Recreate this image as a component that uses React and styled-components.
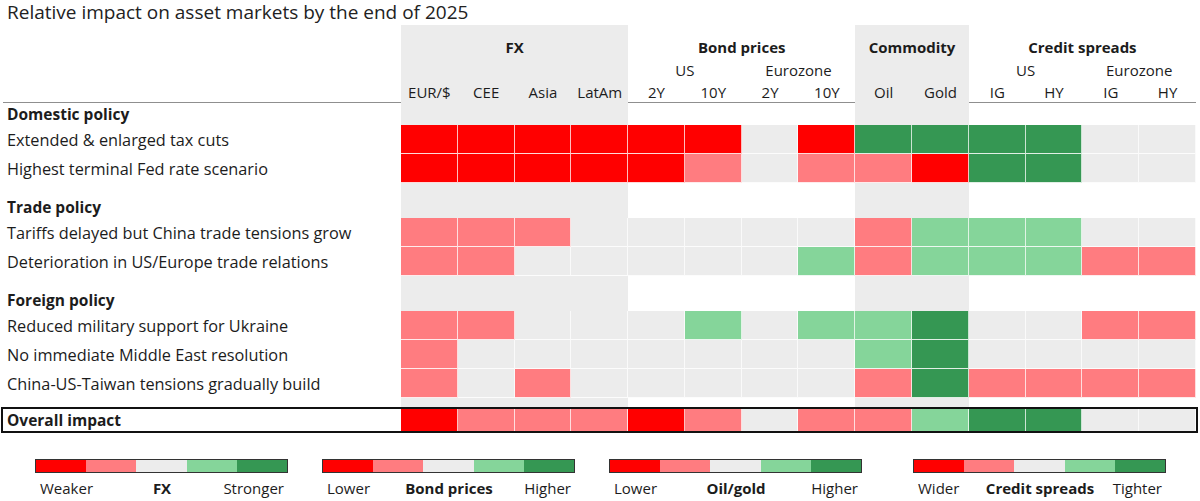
import React from 'react'
import styled, { createGlobalStyle } from 'styled-components'

const GlobalStyle = createGlobalStyle`
  html, body {
    margin: 0;
    padding: 0;
    background: #ffffff;
  }
  body {
    font-family: "Open Sans", "Noto Sans", sans-serif;
    color: #1c1c1c;
  }
`

// colour key: R strong red, r light red, n neutral, g light green, G dark green
const COLORS = {
  R: '#ff0000',
  r: '#ff7c80',
  n: '#ececec',
  g: '#85d59a',
  G: '#359753',
}
const BAND = '#ececec'

const isBand = (i) => i < 4 || i === 8 || i === 9

const columns = ['EUR/$', 'CEE', 'Asia', 'LatAm', '2Y', '10Y', '2Y', '10Y', 'Oil', 'Gold', 'IG', 'HY', 'IG', 'HY']

const sections = [
  {
    title: 'Domestic policy',
    first: true,
    rows: [
      { label: 'Extended & enlarged tax cuts', cells: 'RRRRRRnRGGGGnn' },
      { label: 'Highest terminal Fed rate scenario', cells: 'RRRRRrnrrRGGnn' },
    ],
  },
  {
    title: 'Trade policy',
    rows: [
      { label: 'Tariffs delayed but China trade tensions grow', cells: 'rrrnnnnnrgggnn' },
      { label: 'Deterioration in US/Europe trade relations', cells: 'rrnnnnngrgggrr' },
    ],
  },
  {
    title: 'Foreign policy',
    rows: [
      { label: 'Reduced military support for Ukraine', cells: 'rrnnngnggGnnrr' },
      { label: 'No immediate Middle East resolution', cells: 'rnnnnnnngGnnnn' },
      { label: 'China-US-Taiwan tensions gradually build', cells: 'rnrnnnnnrGrrrr' },
    ],
  },
]

const overall = 'RrrrRrnrrgGGnn'

const legends = [
  { left: 'Weaker', mid: 'FX', right: 'Stronger' },
  { left: 'Lower', mid: 'Bond prices', right: 'Higher' },
  { left: 'Lower', mid: 'Oil/gold', right: 'Higher' },
  { left: 'Wider', mid: 'Credit spreads', right: 'Tighter' },
]

const Page = styled.div`
  width: 1200px;
  height: 501px;
  overflow: hidden;
`

const Title = styled.div`
  height: 25px;
  line-height: 25px;
  font-size: 19px;
  padding-left: 7px;
  color: #222;
`

const Table = styled.div`
  margin-left: 3px;
  width: 1193px;
`

const Row = styled.div`
  display: grid;
  grid-template-columns: 398px repeat(14, 1fr);
  height: ${(p) => p.h}px;
`

const Label = styled.div`
  display: flex;
  align-items: ${(p) => (p.bottom ? 'flex-end' : 'center')};
  padding-left: 4px;
  font-size: ${(p) => (p.bold ? 15.5 : 16.3)}px;
  font-weight: ${(p) => (p.bold ? 700 : 400)};
  line-height: 22px;
  white-space: nowrap;
`

const HeadCell = styled.div`
  grid-column: span ${(p) => p.span || 1};
  background: ${(p) => (p.band ? BAND : 'transparent')};
  display: flex;
  align-items: flex-end;
  justify-content: center;
  font-size: 15px;
  font-weight: ${(p) => (p.bold ? 700 : 400)};
  line-height: 22px;
  white-space: nowrap;
`

const Rule = styled.div`
  height: 1px;
  background: #8f8f8f;
`

const Filler = styled.div`
  background: ${(p) => (p.band ? BAND : 'transparent')};
`

const Cell = styled.div`
  background: ${(p) => COLORS[p.code]};
  border-right: 1px solid rgba(255, 255, 255, 0.75);
  border-bottom: ${(p) => (p.flat ? 0 : 1)}px solid rgba(255, 255, 255, 0.85);
`

const OverallRow = styled(Row)`
  outline: 2px solid #111;
`

const Legend = styled.div`
  display: flex;
  gap: 34px;
  margin-top: 28px;
  padding-left: 35px;
`

const LegendItem = styled.div`
  width: 253px;
  margin-left: ${(p) => (p.wide ? 17 : 0)}px;
`

const Bar = styled.div`
  display: flex;
  height: 14px;
  border: 1px solid #333;
  box-sizing: border-box;
`

const Swatch = styled.div`
  flex: 1;
  background: ${(p) => COLORS[p.code]};
`

const LegendLabels = styled.div`
  display: grid;
  grid-template-columns: 1fr auto 1fr;
  padding: 0 4px 0 5px;
  margin-top: 5px;
  font-size: 15px;
  line-height: 20px;
  span:first-child { justify-self: start; }
  span:nth-child(2) { font-weight: 700; }
  span:last-child { justify-self: end; }
`

const Fillers = () =>
  columns.map((_, i) => <Filler key={i} band={isBand(i)} />)

const App = () => {
  return (
    <Page>
      <GlobalStyle />
      <Title>Relative impact on asset markets by the end of 2025</Title>
      <Table>
        <Row h={33}>
          <div />
          <HeadCell span={4} band bold>FX</HeadCell>
          <HeadCell span={4} bold>Bond prices</HeadCell>
          <HeadCell span={2} band bold>Commodity</HeadCell>
          <HeadCell span={4} bold>Credit spreads</HeadCell>
        </Row>
        <Row h={23}>
          <div />
          <HeadCell span={4} band />
          <HeadCell span={2}>US</HeadCell>
          <HeadCell span={2}>Eurozone</HeadCell>
          <HeadCell span={2} band />
          <HeadCell span={2}>US</HeadCell>
          <HeadCell span={2}>Eurozone</HeadCell>
        </Row>
        <Row h={21}>
          <div />
          {columns.map((c, i) => (
            <HeadCell key={i} band={isBand(i)}>{c}</HeadCell>
          ))}
        </Row>
        <Rule />

        {sections.map((s) => (
          <React.Fragment key={s.title}>
            <Row h={s.first ? 22 : 35}>
              <Label bold bottom>{s.title}</Label>
              <Fillers />
            </Row>
            {s.rows.map((r) => (
              <Row h={29} key={r.label}>
                <Label>{r.label}</Label>
                {r.cells.split('').map((c, i) => (
                  <Cell key={i} code={c} />
                ))}
              </Row>
            ))}
          </React.Fragment>
        ))}

        <Row h={11}>
          <div />
          <Fillers />
        </Row>
        <OverallRow h={22}>
          <Label bold>Overall impact</Label>
          {overall.split('').map((c, i) => (
            <Cell key={i} code={c} flat />
          ))}
        </OverallRow>
      </Table>

      <Legend>
        {legends.map((l, i) => (
          <LegendItem key={l.mid} wide={i === 3}>
            <Bar>
              {['R', 'r', 'n', 'g', 'G'].map((c) => (
                <Swatch key={c} code={c} />
              ))}
            </Bar>
            <LegendLabels>
              <span>{l.left}</span>
              <span>{l.mid}</span>
              <span>{l.right}</span>
            </LegendLabels>
          </LegendItem>
        ))}
      </Legend>
    </Page>
  )
}

export default App
